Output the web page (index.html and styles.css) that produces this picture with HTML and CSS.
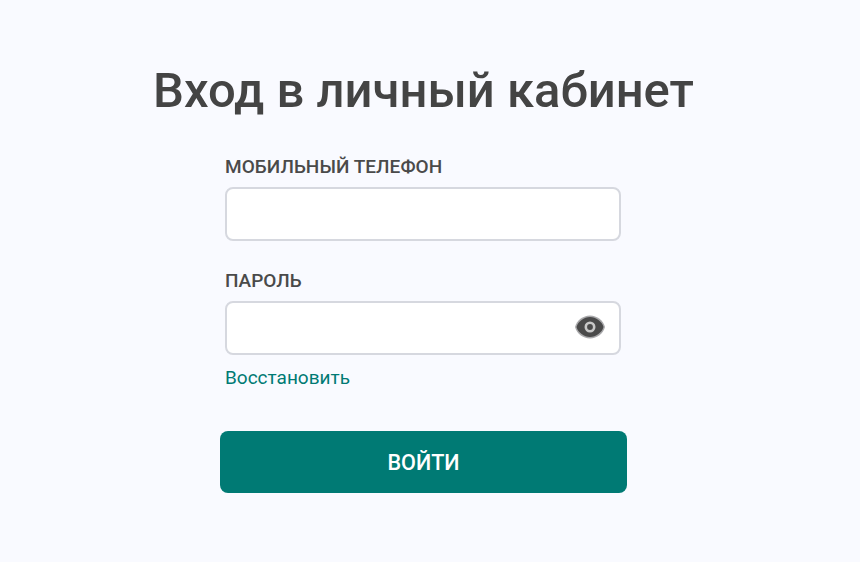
FILE: index.html
```html
<!DOCTYPE html>
<html lang="ru">
<head>
    <meta charset="UTF-8">
    <meta name="viewport" content="width=device-width, initial-scale=1.0">
    <title>Вход в личный кабинет</title>
    <link rel="stylesheet" href="styles.css">
</head>
<body>

    <h1 class="title">Вход в личный кабинет</h1>

    <form class="login-form">
        <label class="field-label" for="phone">МОБИЛЬНЫЙ ТЕЛЕФОН</label>
        <div class="field">
            <input class="field-input" type="tel" id="phone">
        </div>

        <label class="field-label field-label-second" for="password">ПАРОЛЬ</label>
        <div class="field">
            <input class="field-input" type="password" id="password">
            <!-- Show password -->
            <svg class="eye-icon" width="30" height="24" viewBox="0 0 30 24">
                <path d="M0 12C1.500 5.500 8 0.500 15 0.500S28.500 5.500 30 12c-1.500 6.500-8 11.500-15 11.500S1.500 18.500 0 12z" fill="#a9a9ab"/>
                <path d="M1.500 12C3 6.500 9 2 15 2s12 4.500 13.500 10C27 17.500 21 22 15 22S3 17.500 1.500 12z" fill="#4a4a4a"/>
                <circle cx="15" cy="12" r="4.200" fill="none" stroke="#c8c8c8" stroke-width="2.600"/>
            </svg>
        </div>
        <a class="restore-link" href="#">Восстановить</a>

        <button class="submit-btn" type="button">ВОЙТИ</button>
    </form>

</body>
</html>
```

FILE: styles.css
```css
* {
    box-sizing: border-box;
}

body {
    margin: 0;
    min-height: 562px;
    background: #f9faff;
    font-family: Roboto, "Noto Sans", sans-serif;
    color: #444;
}

.title {
    margin: 0;
    padding-top: 61px;
    font-size: 49px;
    font-weight: 500;
    line-height: 60px;
    text-align: center;
    width: 847px;
}

.login-form {
    width: 407px;
    margin: 34px 0 0 220px;
    display: flex;
    flex-direction: column;
}

.field-label {
    margin-left: 5px;
    font-size: 19px;
    font-weight: 500;
    letter-spacing: 0.050px;
    line-height: 24px;
    color: #4a4a4a;
}

.field-label-second {
    margin-top: 28px;
}

.field {
    position: relative;
    margin: 8px 6px 0 5px;
}

.field-input {
    display: block;
    width: 100%;
    height: 54px;
    border: 2px solid #d6d8df;
    border-radius: 8px;
    background: #fff;
    outline: none;
}

.eye-icon {
    position: absolute;
    right: 16px;
    top: 14px;
}

.restore-link {
    margin: 11px 0 0 5px;
    font-size: 19px;
    line-height: 24px;
    color: #007a74;
    text-decoration: none;
}

.submit-btn {
    height: 62px;
    margin-top: 41px;
    border: none;
    border-radius: 8px;
    background: #007a74;
    color: #fff;
    font-family: inherit;
    font-size: 21.600px;
    font-weight: 500;
    cursor: pointer;
}
```
